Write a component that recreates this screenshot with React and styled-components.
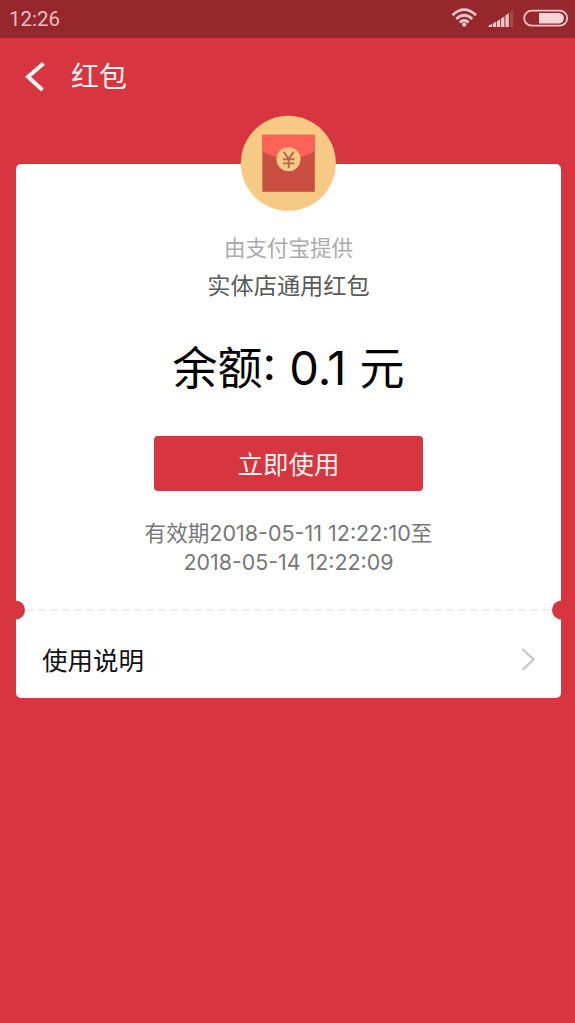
import React from 'react';
import styled, { createGlobalStyle } from 'styled-components';

const GlobalStyle = createGlobalStyle`
  * {
    box-sizing: border-box;
  }

  body {
    margin: 0;
    background: #d7353f;
    font-family: 'Noto Sans CJK SC', sans-serif;
  }
`;

const Screen = styled.div`
  display: flex;
  flex-direction: column;
  min-height: 1023px;
  background: #d7353f;
`;

const StatusBar = styled.header`
  display: flex;
  align-items: center;
  justify-content: space-between;
  height: 38px;
  padding: 0 6px 0 9px;
  background: #95272d;
`;

const Clock = styled.span`
  color: #f3bcc0;
  font-family: Roboto, sans-serif;
  font-size: 20.5px;
  line-height: 38px;
`;

const StatusIcons = styled.svg`
  display: block;
  width: 122px;
  height: 38px;
`;

const NavBar = styled.nav`
  display: flex;
  align-items: center;
  height: 76px;
  padding-left: 24px;
`;

const BackIcon = styled.svg`
  width: 24px;
  height: 32px;
  margin-right: 23px;
`;

const Title = styled.h1`
  margin: 0;
  color: #fff3f2;
  font-size: 28px;
  font-weight: 400;
  line-height: 74px;
  height: 76px;
`;

const Card = styled.main`
  position: relative;
  display: flex;
  flex-direction: column;
  height: 534px;
  margin: 50px 14px 0 16px;
  background: #fff;
  border-radius: 5px;
`;

const Badge = styled.svg`
  position: absolute;
  top: -49px;
  left: 224px;
  width: 96px;
  height: 96px;
`;

const Details = styled.section`
  display: flex;
  flex-direction: column;
  align-items: center;
  height: 446px;
  padding-top: 67px;
`;

const Provider = styled.div`
  color: #aaa;
  font-size: 21.5px;
  line-height: 32px;
`;

const CouponName = styled.div`
  margin-top: 4px;
  color: #5a5a5a;
  font-size: 23.2px;
  line-height: 34px;
`;

const Balance = styled.div`
  display: flex;
  align-items: baseline;
  margin-top: 32px;
  color: #000;
  font-size: 45px;
  line-height: 66px;
`;

const Digits = styled.span`
  font-family: Inter, sans-serif;
  font-size: ${({ $size }) => $size}px;
  font-weight: 400;
  line-height: 1;
`;

const UseButton = styled.button`
  width: 269px;
  height: 55px;
  margin-top: 37px;
  padding: 0 0 2px;
  border: none;
  border-radius: 4px;
  background: #d7353f;
  color: #fff0ef;
  font-family: inherit;
  font-size: 25.5px;
  line-height: 53px;
`;

const Validity = styled.div`
  margin-top: 26px;
  color: #777;
  font-size: 21.6px;
  line-height: 29px;
  text-align: center;
  white-space: nowrap;
`;

const Divider = styled.svg`
  position: absolute;
  top: 436px;
  left: -1px;
  width: 547px;
  height: 20px;
`;

const InstructionRow = styled.section`
  display: flex;
  align-items: center;
  justify-content: space-between;
  flex: 1;
  padding: 9px 24px 0 26px;
  color: #111;
  font-size: 25.5px;
`;

const Chevron = styled.svg`
  width: 18px;
  height: 26px;
`;

const App = () => {
  return (
    <>
      <GlobalStyle />
      <Screen>
        <StatusBar>
          <Clock>12:26</Clock>
          <StatusIcons viewBox="447 0 122 38" fill="none">
            {/* wifi */}
            <g stroke="#f3c6c8" strokeWidth="2.7">
              <path d="M452.5 15.2 Q464.2 4.2 476 15.2" />
              <path d="M456.2 18.9 Q464.2 11.6 472.3 18.9" />
              <path d="M459.8 22.4 Q464.2 18.6 468.7 22.4" />
            </g>
            <circle cx="464.2" cy="24.6" r="2.2" fill="#f3c6c8" />
            {/* signal */}
            <g fill="#f3c6c8">
              <path d="M488.6 27 V25.8 L492.2 23.8 V27 Z" />
              <path d="M493 27 V23.4 L496.2 21.6 V27 Z" />
              <path d="M497 27 V21.2 L500.2 19.3 V27 Z" />
              <path d="M501.1 27 V18.6 L504.4 16.4 V27 Z" />
              <path d="M505.4 27 V15.4 L508.8 13 V27 Z" />
              <path d="M510 27 V12.3 L513.2 10.2 V27 Z" opacity="0.2" />
            </g>
            {/* battery */}
            <rect x="524.2" y="10.7" width="43" height="15" rx="7.5" stroke="#f3c6c8" strokeWidth="1.8" />
            <path d="M539 13 H559.5 A5.3 5.3 0 0 1 559.5 23.4 H539 Z" fill="#f6d5d7" />
          </StatusIcons>
        </StatusBar>

        <NavBar>
          <BackIcon viewBox="0 0 24 32" fill="none">
            <path d="M19.5 3.5 L4 16.8 L18.5 30" stroke="#fff6f4" strokeWidth="4" />
          </BackIcon>
          <Title>红包</Title>
        </NavBar>

        <Card>
          <Badge viewBox="0 0 96 96">
            <circle cx="48.3" cy="48.3" r="47.5" fill="#f6ca84" />
            <rect x="22.3" y="19.8" width="52.5" height="57" fill="#c84f42" />
            <path d="M22.3 19.8 H74.8 V36 Q63 43.5 48.5 43.5 Q34 43.5 22.3 36 Z" fill="#fe6258" />
            <circle cx="48.5" cy="44.2" r="12" fill="#f6ca84" />
            <path
              d="M43.7 36.8 L48.7 44 L53.7 36.8 M48.7 44 V53 M43 44.2 H54.4 M43 48.4 H54.4"
              fill="none"
              stroke="#b8684a"
              strokeWidth="1.9"
            />
          </Badge>

          <Details>
            <Provider>由支付宝提供</Provider>
            <CouponName>实体店通用红包</CouponName>
            <Balance>
              余额<Digits $size={47}>:&nbsp;0.1&nbsp;</Digits>元
            </Balance>
            <UseButton>立即使用</UseButton>
            <Validity>
              有效期<Digits $size={21.5}>2018-05-11 12:22:10</Digits>至
              <br />
              <Digits $size={21.4}>2018-05-14 12:22:09</Digits>
            </Validity>
          </Details>

          <Divider viewBox="0 0 547 20" fill="none">
            <path d="M11 10 H537" stroke="#e9e9e9" strokeWidth="1.4" strokeDasharray="8 4" />
            <circle cx="0.5" cy="10" r="9.5" fill="#d7353f" />
            <circle cx="546.5" cy="10" r="9.5" fill="#d7353f" />
          </Divider>

          <InstructionRow>
            <span>使用说明</span>
            <Chevron viewBox="0 0 18 26" fill="none">
              <path d="M3.5 3 L14.5 13.5 L3.5 24" stroke="#c8c8c8" strokeWidth="2.3" />
            </Chevron>
          </InstructionRow>
        </Card>
      </Screen>
    </>
  );
};

export default App;
